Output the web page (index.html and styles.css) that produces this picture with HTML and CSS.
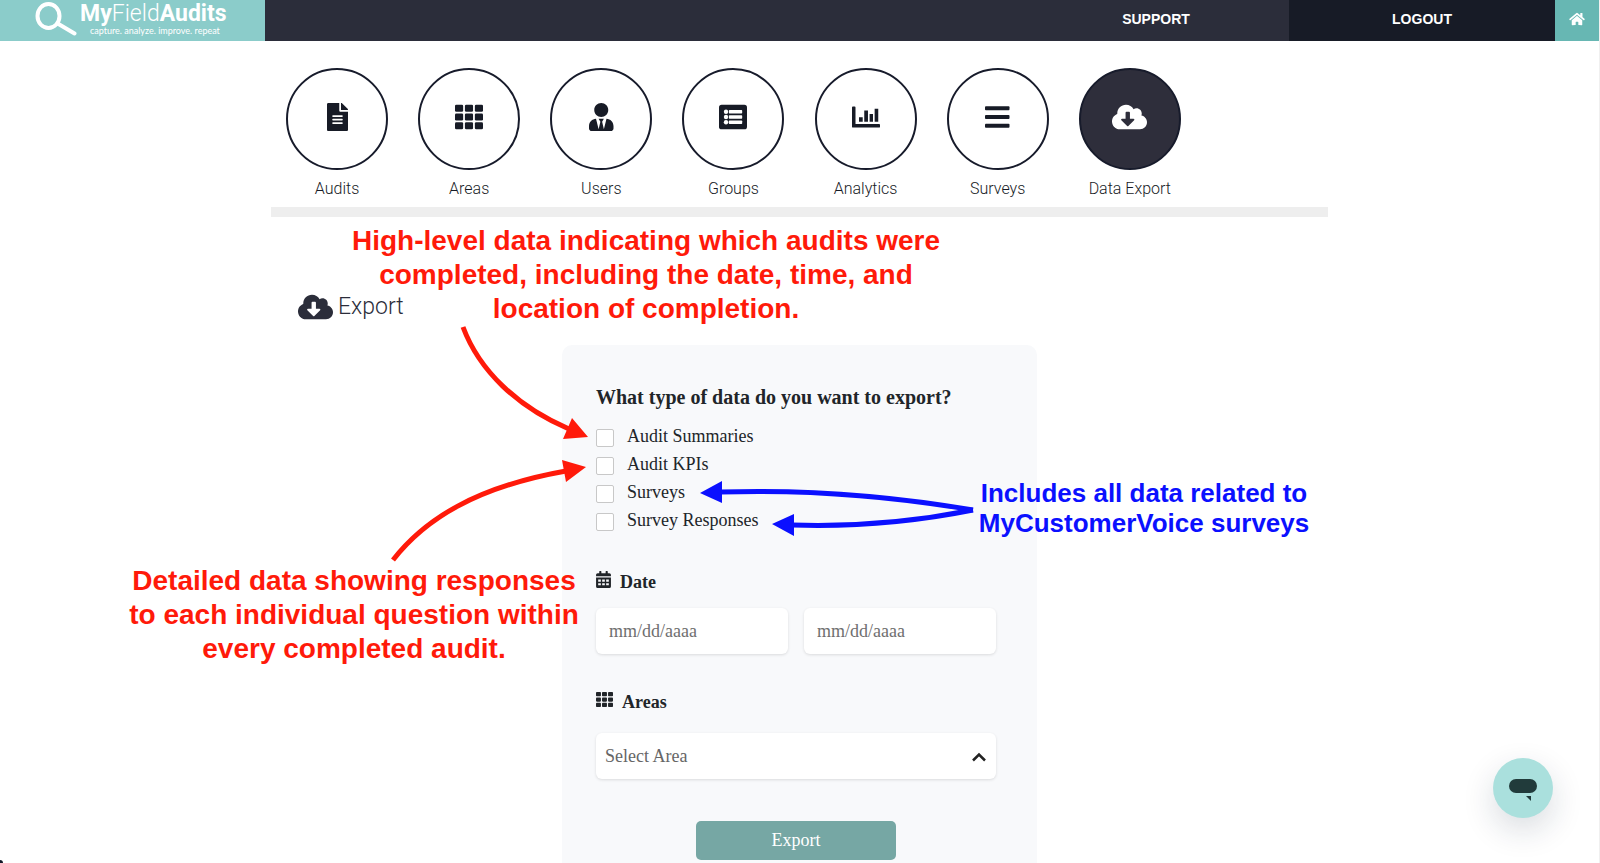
FILE: index.html
```html
<!DOCTYPE html>
<html lang="en">
<head>
  <meta charset="UTF-8">
  <meta name="viewport" content="width=device-width, initial-scale=1.0">
  <title>MyFieldAudits - Data Export</title>
  <link rel="stylesheet" href="styles.css">
</head>
<body>
  <header class="topbar">
    <a class="logo" href="#">
      <svg class="logo-glass" viewBox="0 0 42 34" aria-hidden="true">
        <ellipse cx="13.500" cy="14" rx="11" ry="12" fill="none" stroke="#fff" stroke-width="4"/>
        <path d="M23.500 22L39.500 31.500" stroke="#fff" stroke-width="4" stroke-linecap="round"/>
      </svg>
      <span class="logo-text">
        <span class="logo-name"><b>My</b>Field<b>Audits</b></span>
        <span class="logo-tag">capture. analyze. improve. repeat</span>
      </span>
    </a>
    <nav class="topnav">
      <a class="support" href="#">SUPPORT</a>
      <a class="logout" href="#">LOGOUT</a>
      <a class="home" href="#" aria-label="Home">
        <svg viewBox="0 0 576 512"><path d="M280.37 148.26L96 300.11V464a16 16 0 0 0 16 16l112.06-.29a16 16 0 0 0 15.92-16V368a16 16 0 0 1 16-16h64a16 16 0 0 1 16 16v95.64a16 16 0 0 0 16 16.05L464 480a16 16 0 0 0 16-16V300L295.67 148.26a12.19 12.19 0 0 0-15.3 0zM571.6 251.47L488 182.56V44.05a12 12 0 0 0-12-12h-56a12 12 0 0 0-12 12v72.61L318.47 43a48 48 0 0 0-61 0L4.34 251.47a12 12 0 0 0-1.6 16.9l25.5 31A12 12 0 0 0 45.15 301l235.22-193.74a12.19 12.19 0 0 1 15.3 0L530.9 301a12 12 0 0 0 16.9-1.6l25.5-31a12 12 0 0 0-1.7-16.93z"/></svg>
      </a>
    </nav>
  </header>

  <!-- shared icons -->
  <svg class="sprite" aria-hidden="true">
    <symbol id="icon-th" viewBox="0 0 512 512">
      <rect x="0" y="32" width="149" height="128" rx="24"/>
      <rect x="181" y="32" width="149" height="128" rx="24"/>
      <rect x="363" y="32" width="149" height="128" rx="24"/>
      <rect x="0" y="192" width="149" height="128" rx="24"/>
      <rect x="181" y="192" width="149" height="128" rx="24"/>
      <rect x="363" y="192" width="149" height="128" rx="24"/>
      <rect x="0" y="352" width="149" height="128" rx="24"/>
      <rect x="181" y="352" width="149" height="128" rx="24"/>
      <rect x="363" y="352" width="149" height="128" rx="24"/>
    </symbol>
    <symbol id="icon-cloud" viewBox="0 0 640 512">
      <path d="M537.6 226.6c4.1-10.7 6.4-22.4 6.4-34.6 0-53-43-96-96-96-19.7 0-38.1 6-53.3 16.2C367 64.2 315.3 32 256 32c-88.4 0-160 71.6-160 160 0 2.7.1 5.4.2 8.1C40.2 219.8 0 273.2 0 336c0 79.5 64.5 144 144 144h368c70.7 0 128-57.3 128-128 0-61.9-44-113.6-102.4-125.4zm-132.9 88.7L299.3 420.7c-6.2 6.2-16.4 6.2-22.6 0L171.3 315.3c-10.1-10.1-2.9-27.3 11.3-27.3H248V176c0-8.8 7.2-16 16-16h48c8.8 0 16 7.2 16 16v112h65.4c14.2 0 21.4 17.2 11.3 27.3z"/>
    </symbol>
  </svg>

  <main class="container">
    <nav class="menu">
      <a class="menu-item" href="#">
        <span class="circle"><svg viewBox="0 0 384 512"><path d="M224 136V0H24C10.700 0 0 10.700 0 24v464c0 13.300 10.700 24 24 24h336c13.300 0 24-10.700 24-24V160H248c-13.200 0-24-10.800-24-24zm64 236c0 6.600-5.400 12-12 12H108c-6.600 0-12-5.400-12-12v-8c0-6.600 5.400-12 12-12h168c6.600 0 12 5.400 12 12v8zm0-64c0 6.600-5.400 12-12 12H108c-6.600 0-12-5.400-12-12v-8c0-6.600 5.400-12 12-12h168c6.600 0 12 5.400 12 12v8zm0-72v8c0 6.600-5.400 12-12 12H108c-6.600 0-12-5.400-12-12v-8c0-6.600 5.400-12 12-12h168c6.600 0 12 5.400 12 12zm96-114.100v6.100H256V0h6.100c6.400 0 12.500 2.500 17 7l97.900 98c4.500 4.500 7 10.600 7 16.900z"/></svg></span>
        Audits
      </a>
      <a class="menu-item" href="#">
        <span class="circle"><svg viewBox="0 0 512 512"><use href="#icon-th"/></svg></span>
        Areas
      </a>
      <a class="menu-item" href="#">
        <span class="circle"><svg viewBox="0 0 448 512"><path d="M224 256c70.700 0 128-57.300 128-128S294.700 0 224 0 96 57.300 96 128s57.300 128 128 128zm95.800 32.600L272 480l-32-136 32-56h-96l32 56-32 136-47.800-191.400C56.900 292 0 350.300 0 422.400V464c0 26.500 21.500 48 48 48h352c26.500 0 48-21.500 48-48v-41.600c0-72.100-56.900-130.400-128.200-133.800z"/></svg></span>
        Users
      </a>
      <a class="menu-item" href="#">
        <span class="circle"><svg viewBox="0 0 512 512">
          <rect x="0" y="32" width="512" height="448" rx="48"/>
          <g fill="#fff">
            <circle cx="128" cy="160" r="40"/><circle cx="128" cy="256" r="40"/><circle cx="128" cy="352" r="40"/>
            <rect x="180" y="130" width="244" height="60" rx="12"/>
            <rect x="180" y="226" width="244" height="60" rx="12"/>
            <rect x="180" y="322" width="244" height="60" rx="12"/>
          </g>
        </svg></span>
        Groups
      </a>
      <a class="menu-item" href="#">
        <span class="circle"><svg viewBox="0 0 512 512"><path d="M16 64h32q16 0 16 16v304h432q16 0 16 16v32q0 16-16 16H16q-16 0-16-16V80q0-16 16-16zM128 260h68v85h-68zM224 137h68v208h-68zM322 200h62v145h-62zM414 107h66v238h-66z"/></svg></span>
        Analytics
      </a>
      <a class="menu-item" href="#">
        <span class="circle"><svg viewBox="0 0 448 512">
          <rect x="0" y="60" width="448" height="72" rx="16"/>
          <rect x="0" y="220" width="448" height="72" rx="16"/>
          <rect x="0" y="380" width="448" height="72" rx="16"/>
        </svg></span>
        Surveys
      </a>
      <a class="menu-item active" href="#">
        <span class="circle"><svg viewBox="0 0 640 512"><use href="#icon-cloud"/></svg></span>
        Data Export
      </a>
    </nav>

    <h1 class="page-title">
      <svg viewBox="0 0 640 512" aria-hidden="true"><use href="#icon-cloud"/></svg>
      Export
    </h1>

    <form class="card">
      <h2 class="question">What type of data do you want to export?</h2>
      <div class="checks">
        <label class="check"><input type="checkbox" name="summaries">Audit Summaries</label>
        <label class="check"><input type="checkbox" name="kpis">Audit KPIs</label>
        <label class="check"><input type="checkbox" name="surveys">Surveys</label>
        <label class="check"><input type="checkbox" name="responses">Survey Responses</label>
      </div>

      <h3 class="field-title">
        <svg class="icon-date" viewBox="0 0 448 512" aria-hidden="true"><path fill-rule="evenodd" d="M48 64h48V16q0-16 16-16h32q16 0 16 16v48h128V16q0-16 16-16h32q16 0 16 16v48h48q48 0 48 48v48H0v-48q0-48 48-48zM0 192h448v272q0 48-48 48H48q-48 0-48-48zM64 256v64h80v-64zM184 256v64h80v-64zM304 256v64h80v-64zM64 368v64h80v-64zM184 368v64h80v-64zM304 368v64h80v-64z"/></svg>
        Date
      </h3>
      <div class="dates">
        <input class="field" type="text" placeholder="mm/dd/aaaa" aria-label="Start date">
        <input class="field" type="text" placeholder="mm/dd/aaaa" aria-label="End date">
      </div>

      <h3 class="field-title areas-title">
        <svg class="icon-areas" viewBox="0 0 512 512" aria-hidden="true"><use href="#icon-th"/></svg>
        <label for="area">Areas</label>
      </h3>
      <div class="select">
        <select class="field" id="area">
          <option>Select Area</option>
        </select>
        <svg class="chevron" viewBox="0 0 14 10" aria-hidden="true"><path d="M1 8.500L7 2.500L13 8.500" fill="none" stroke="#222" stroke-width="2.500"/></svg>
      </div>

      <button class="export-btn" type="button">Export</button>
    </form>

    <!-- notes drawn over the page -->
    <svg class="arrows" viewBox="271 41 1057 822" aria-hidden="true">
      <g stroke="#ff1a0a" fill="none" stroke-width="5">
        <path d="M463 327C479 370 517 407 569 429"/>
        <path d="M393 560C425 519 476 487 566 471"/>
      </g>
      <path fill="#ff1a0a" d="M588 437L572 418L563 439zM586 467L562 460L566 482z"/>
      <g stroke="#0b10ff" fill="none" stroke-width="5">
        <path d="M973 510Q845 488 720 492"/>
        <path d="M973 510Q883 528 792 525"/>
      </g>
      <path fill="#0b10ff" d="M700 493L722 481V503zM772 524L794 514V536z"/>
    </svg>
    <p class="note note-summaries">High-level data indicating which audits were<br>completed, including the date, time, and<br>location of completion.</p>
    <p class="note note-kpis">Detailed data showing responses<br>to each individual question within<br>every completed audit.</p>
    <p class="note note-surveys">Includes all data related to<br>MyCustomerVoice surveys</p>
  </main>

  <button class="chat" type="button" aria-label="Open chat">
    <svg viewBox="0 0 28 24"><rect x="0" y="0" width="28" height="14" rx="7"/><path d="M17 17H22V22z"/></svg>
  </button>
</body>
</html>
```
FILE: styles.css
```css
* {
  box-sizing: border-box;
}

body {
  margin: 0;
  height: 100vh;
  overflow: hidden;
  background: #fff;
  border-right: 1px solid #f0f0f0;
  font-family: "Liberation Sans", Arial, sans-serif;
  color: #171b26;
}

/* dark window corner */
body::after {
  content: "";
  position: fixed;
  left: 0;
  bottom: 0;
  width: 3px;
  height: 3px;
  border-top-right-radius: 3px;
  background: #111827;
}

a {
  color: inherit;
  text-decoration: none;
}

svg {
  display: block;
  fill: currentColor;
}

.sprite {
  display: none;
}

/* top bar */
.topbar {
  display: flex;
  height: 41px;
  background: #2b2d3a;
}

.logo {
  display: flex;
  width: 265px;
  padding-left: 35px;
  gap: 3px;
  background: #8bccca;
  color: #fff;
  font-family: Roboto, sans-serif;
}

.logo-glass {
  width: 42px;
  height: 34px;
  margin-top: 2px;
}

.logo-text {
  display: flex;
  flex-direction: column;
}

.logo-name {
  font-size: 23px;
  line-height: 27px;
  font-weight: 300;
}

.logo-name b {
  font-weight: 700;
}

.logo-tag {
  padding-left: 10px;
  font-family: Lato, sans-serif;
  font-size: 9px;
  line-height: 8px;
}

.topnav {
  display: flex;
  flex: 1;
  justify-content: flex-end;
  color: #fff;
  font-size: 14px;
  font-weight: bold;
}

.topnav a {
  display: flex;
  align-items: center;
  justify-content: center;
  width: 266px;
  padding-bottom: 3px;
}

.topnav .logout {
  background: #171b26;
}

.topnav .home {
  width: 44px;
  background: #67b7b3;
}

.home svg {
  width: 16px;
  height: 14px;
}

/* menu */
.container {
  position: relative;
  max-width: 1057px;
  margin: 0 auto;
  padding-top: 27px;
}

.menu {
  display: grid;
  grid-template-columns: repeat(8, 1fr);
  padding-bottom: 8px;
  border-bottom: 10px solid #eee;
}

.menu-item {
  display: flex;
  flex-direction: column;
  align-items: center;
  gap: 9px;
  font-family: Roboto, sans-serif;
  font-size: 16px;
  font-weight: 300;
  line-height: 20px;
}

.circle {
  display: flex;
  align-items: center;
  justify-content: center;
  width: 102px;
  height: 102px;
  padding-bottom: 4px;
  border: 2px solid #171b2b;
  border-radius: 50%;
}

.circle svg {
  height: 28px;
}

.active .circle {
  background: #2e2e3b;
  color: #fff;
}

.page-title {
  display: flex;
  gap: 5px;
  margin: 76px 0 24px;
  padding-left: 27px;
  font-family: Roboto, sans-serif;
  font-size: 23px;
  line-height: 28px;
  font-weight: 300;
  color: #2b2d3a;
}

.page-title svg {
  height: 28px;
}

/* export form */
.card {
  width: 475px;
  margin: 0 auto;
  padding: 40px 41px 40px 34px;
  border-radius: 10px;
  background: #f8f9fb;
  color: #212529;
  font-family: "Liberation Serif", "Times New Roman", serif;
  font-size: 18px;
}

.question {
  margin: 0 0 15px;
  font-size: 20px;
  line-height: 24px;
  white-space: nowrap;
}

.check {
  display: flex;
  gap: 13px;
  height: 28px;
  line-height: 24px;
}

.check input {
  appearance: none;
  width: 18px;
  height: 18px;
  margin: 5px 0 0;
  border: 1px solid #c8c8c8;
  border-radius: 2px;
  background: #fff;
}

.field-title {
  display: flex;
  gap: 9px;
  margin: 35px 0 15px;
  font-size: 18px;
  line-height: 22px;
}

.areas-title {
  margin: 37px 0 20px;
}

.icon-date {
  width: 15px;
  height: 17px;
}

.icon-areas {
  width: 17px;
  height: 17px;
}

.dates {
  display: grid;
  grid-template-columns: 1fr 1fr;
  gap: 16px;
}

.field {
  width: 100%;
  height: 46px;
  padding: 0 13px;
  border: 0;
  border-radius: 6px;
  background: #fff;
  box-shadow: 0 1px 3px rgba(0, 0, 0, 0.12);
  color: #666;
  font-family: inherit;
  font-size: 18px;
}

.field::placeholder {
  color: #6f6f6f;
}

.select {
  position: relative;
}

.select .field {
  appearance: none;
  padding: 0 9px;
}

.chevron {
  position: absolute;
  right: 10px;
  top: 19px;
  width: 14px;
  height: 10px;
  pointer-events: none;
}

.export-btn {
  display: block;
  width: 200px;
  height: 39px;
  margin: 42px auto 0;
  border: 0;
  border-radius: 5px;
  background: #76a7a4;
  color: #fff;
  font-family: inherit;
  font-size: 18px;
}

/* notes */
.arrows {
  position: absolute;
  top: 0;
  left: 0;
  width: 1057px;
  height: 822px;
  pointer-events: none;
}

.note {
  position: absolute;
  margin: 0;
  color: #ff1a0a;
  font-size: 28px;
  line-height: 34px;
  font-weight: bold;
  text-align: center;
  white-space: nowrap;
}

.note-summaries {
  top: 183px;
  left: 75px;
  width: 600px;
}

.note-kpis {
  top: 523px;
  left: -147px;
  width: 460px;
}

.note-surveys {
  top: 437px;
  left: 703px;
  width: 340px;
  color: #0b10ff;
  font-size: 26px;
  line-height: 30px;
}

.chat {
  position: fixed;
  right: 47px;
  bottom: 45px;
  width: 60px;
  height: 60px;
  padding: 5px 0 0 16px;
  border: 0;
  border-radius: 50%;
  background: #aae0dd;
  box-shadow: 0 12px 32px rgba(20, 40, 60, 0.16);
  color: #213b3b;
}

.chat svg {
  width: 28px;
  height: 24px;
}
```
